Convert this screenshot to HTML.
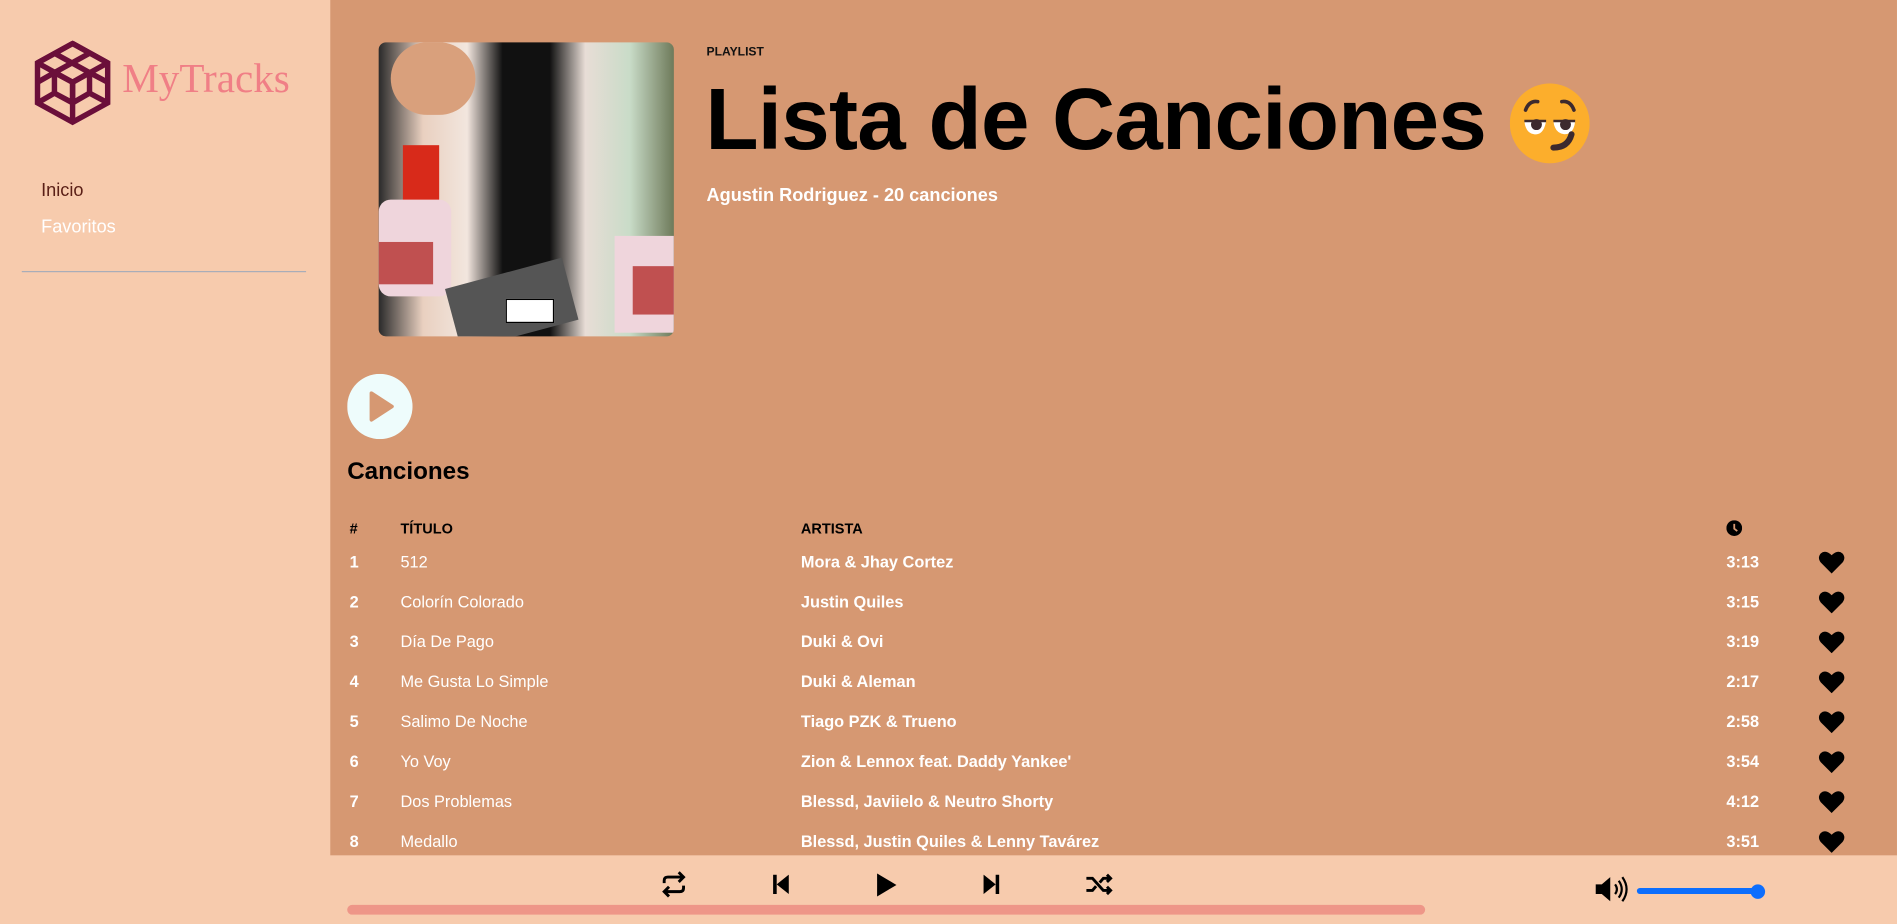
<!DOCTYPE html>
<html><head><meta charset="utf-8">
<style>
*{margin:0;padding:0;box-sizing:border-box}
html,body{width:1897px;height:924px;overflow:hidden;background:#f7cbad}
#s{position:absolute;left:0;top:0;width:1568px;height:764px;transform:scale(1.2098);transform-origin:0 0;font-family:"Liberation Sans",sans-serif;background:#f7cbad}
.a{position:absolute}
#main{left:273px;top:0;width:1295px;height:707px;background:#d69872;overflow:hidden}
.b{font-weight:bold}
.w{color:#fff}
.row{position:absolute;left:0;width:1295px;height:20px;font-size:13.5px;color:#fff}
.row span{position:absolute;top:0;white-space:nowrap}
</style></head><body><div id="s">
<svg class="a" style="left:28px;top:33px" width="64" height="71" viewBox="0 0 64 71">
<g fill="none" stroke="#6b0f3a" stroke-width="4.5" stroke-linejoin="miter">
<path d="M32 3 L61 19 L61 52 L32 68 L3 52 L3 19 Z"/>
<path d="M32 3 L3 19 M32 3 L61 19"/>
<path d="M17 11 L46 27 L46 44 M46 11 L17 27 L17 44"/>
<path d="M3 19 L32 35 L61 19 M32 35 L32 68"/>
<path d="M3 35 L17 27 L32 35 L46 27 L61 35 M17 44 L32 52 L46 44 M17 44 L3 52 M46 44 L61 52 M32 35 L32 52"/>
</g></svg>
<div class="a" style="left:101px;top:47px;font-family:'Liberation Serif',serif;font-size:34px;color:#f07f86">MyTracks</div>
<div class="a" style="left:34px;top:149px;font-size:15px;color:#5a1f16">Inicio</div>
<div class="a" style="left:34px;top:179px;font-size:15px;color:#fff">Favoritos</div>
<div class="a" style="left:18px;top:224px;width:235px;height:1px;background:#a9adb8"></div>

<div class="a" id="main">
 <div class="a" style="left:40px;top:35px;width:244px;height:243px;border-radius:6px;overflow:hidden;background:linear-gradient(90deg,#2a2a2a 0%,#e9d0c0 15%,#f2e6de 30%,#111 42%,#111 58%,#e8ddd6 70%,#c9dcc8 85%,#6e7a5a 100%)">
  <div class="a" style="left:10px;top:0;width:70px;height:60px;background:#d9a07c;border-radius:30px"></div>
  <div class="a" style="left:20px;top:85px;width:30px;height:50px;background:#d82a1a"></div>
  <div class="a" style="left:0;top:130px;width:60px;height:80px;background:#efd5dc;border-radius:10px"></div>
  <div class="a" style="left:0;top:165px;width:45px;height:35px;background:#c05050"></div>
  <div class="a" style="left:195px;top:160px;width:49px;height:80px;background:#efd5dc"></div>
  <div class="a" style="left:210px;top:185px;width:34px;height:40px;background:#c05050"></div>
  <div class="a" style="left:60px;top:190px;width:100px;height:53px;background:#555;transform:rotate(-15deg)"></div>
  <div class="a" style="left:105px;top:212px;width:40px;height:20px;background:#fff;border:1px solid #000"></div>
 </div>
 <div class="a b" style="left:311px;top:38px;font-size:10px;color:#111">PLAYLIST</div>
 <div class="a b" style="left:310px;top:63px;font-size:72px;line-height:1;color:#000;letter-spacing:-0.6px;white-space:nowrap">Lista de Canciones</div>
 <svg class="a" style="left:975px;top:69px" width="66" height="66" viewBox="0 0 66 66">
  <circle cx="33" cy="33" r="33" fill="#fcae2c"/>
  <path d="M13 22 Q16 14 23 15 M53 22 Q50 14 43 15" stroke="#3c2a2e" stroke-width="3" fill="none" stroke-linecap="round"/>
  <path d="M12 31 L30 31 Q28 43 20 42 Q13 41 12 31Z M36 31 L54 31 Q53 42 45 42 Q37 41 36 31Z" fill="#fff"/>
  <circle cx="22" cy="34" r="4.5" fill="#3c2a2e"/><circle cx="46" cy="34" r="4.5" fill="#3c2a2e"/>
  <path d="M12 31 L30 31 M36 31 L54 31" stroke="#3c2a2e" stroke-width="2"/>
  <path d="M36 53 Q48 53 51 42" stroke="#3c2a2e" stroke-width="5" fill="none" stroke-linecap="round"/>
 </svg>
 <div class="a b w" style="left:311px;top:153px;font-size:15px">Agustin Rodriguez - 20 canciones</div>
 <svg class="a" style="left:14px;top:309px" width="54" height="54" viewBox="0 0 54 54"><circle cx="27" cy="27" r="27" fill="#eefcfc"/><path d="M20 16 L37 27 L20 38Z" fill="#d69872" stroke="#d69872" stroke-width="3" stroke-linejoin="round"/></svg>
 <div class="a b" style="left:14px;top:379px;font-size:20px;color:#000">Canciones</div>
 <div class="row b" style="top:430px;font-size:12px;color:#000"><span style="left:16px">#</span><span style="left:58px">TÍTULO</span><span style="left:389px">ARTISTA</span>
  <svg class="a" style="left:1154px;top:0" width="13" height="13" viewBox="0 0 13 13"><circle cx="6.5" cy="6.5" r="6.5" fill="#000"/><path d="M6.5 3 V7 L9 9" stroke="#d69872" stroke-width="1.5" fill="none"/></svg></div>
 <div id="rows"></div>
</div>

<svg class="a" style="left:545px;top:720px" width="24" height="22" viewBox="0 0 24 22"><path d="M4 10 V8 Q4 5 7 5 H19 M16 1 L20 5 L16 9 M20 12 V14 Q20 17 17 17 H5 M8 13 L4 17 L8 21" stroke="#000" stroke-width="2.4" fill="none"/></svg>
<svg class="a" style="left:639px;top:723px" width="14" height="16" viewBox="0 0 14 16"><rect x="0" y="0" width="3" height="16" fill="#000"/><path d="M13 0 L3 8 L13 16Z" fill="#000"/></svg>
<svg class="a" style="left:724px;top:722px" width="18" height="19" viewBox="0 0 18 19"><path d="M1 0 L17 9.5 L1 19Z" fill="#000"/></svg>
<svg class="a" style="left:812px;top:723px" width="14" height="16" viewBox="0 0 14 16"><rect x="11" y="0" width="3" height="16" fill="#000"/><path d="M1 0 L11 8 L1 16Z" fill="#000"/></svg>
<svg class="a" style="left:897px;top:721px" width="24" height="20" viewBox="0 0 24 20"><path d="M1 5 H6 L15 15 H21 M1 15 H6 L9 11.5 M12 8.5 L15 5 H21 M18 2 L21 5 L18 8 M18 12 L21 15 L18 18" stroke="#000" stroke-width="2.4" fill="none"/></svg>
<div class="a" style="left:287px;top:748px;width:891px;height:8px;border-radius:4px;background:#ee9688"></div>
<svg class="a" style="left:1318px;top:724px" width="28" height="22" viewBox="0 0 28 22"><path d="M1 7 H6 L13 1 V21 L6 15 H1Z" fill="#000"/><path d="M17 7 Q20 11 17 15 M20 4 Q25 11 20 18 M23 1 Q30 11 23 21" stroke="#000" stroke-width="1.8" fill="none"/></svg>
<div class="a" style="left:1353px;top:734px;width:100px;height:5px;border-radius:3px;background:#0d6efd"></div>
<div class="a" style="left:1447px;top:731px;width:12px;height:12px;border-radius:6px;background:#0d6efd"></div>
</div>
<script>
var d=[["512","Mora & Jhay Cortez","3:13"],["Colorín Colorado","Justin Quiles","3:15"],["Día De Pago","Duki & Ovi","3:19"],["Me Gusta Lo Simple","Duki & Aleman","2:17"],["Salimo De Noche","Tiago PZK & Trueno","2:58"],["Yo Voy","Zion & Lennox feat. Daddy Yankee'","3:54"],["Dos Problemas","Blessd, Javiielo & Neutro Shorty","4:12"],["Medallo","Blessd, Justin Quiles & Lenny Tavárez","3:51"]];
var h="";d.forEach(function(r,i){var y=457+i*33;h+='<div class="row" style="top:'+y+'px"><span class="b" style="left:16px">'+(i+1)+'</span><span style="left:58px">'+r[0]+'</span><span class="b" style="left:389px">'+r[1]+'</span><span class="b" style="left:1154px">'+r[2]+'</span><svg style="position:absolute;left:1230px;top:-2px" width="22" height="19" viewBox="0 0 22 19"><path d="M11 19 L2 10 Q-1 6 2 2.5 Q6 -1 11 4 Q16 -1 20 2.5 Q23 6 20 10Z" fill="#000"/></svg></div>';});
document.getElementById("rows").innerHTML=h;
</script>
</body></html>
